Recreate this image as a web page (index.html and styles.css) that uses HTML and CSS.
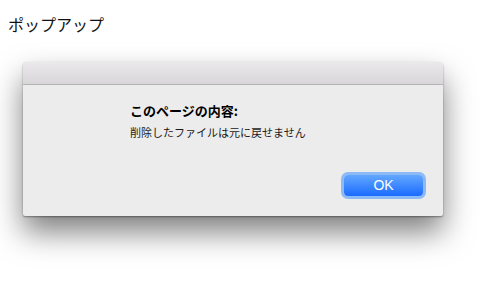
FILE: index.html
```html
<!DOCTYPE html>
<html lang="ja">
<head>
<meta charset="utf-8">
<title>ポップアップ</title>
<link rel="stylesheet" href="styles.css">
</head>
<body>
<div class="page">
  <div class="page-title">ポップアップ</div>
  <div class="dialog">
    <div class="titlebar"></div>
    <div class="dialog-body">
      <div class="heading">このページの内容:</div>
      <div class="message">削除したファイルは元に戻せません</div>
      <div class="actions">
        <button class="ok-btn" type="button">OK</button>
      </div>
    </div>
  </div>
</div>
</body>
</html>
```

FILE: styles.css
```css
html, body {
  margin: 0;
  padding: 0;
  background: #ffffff;
  min-height: 100%;
}
html {
  height: 100%;
}
body {
  font-family: "Noto Sans CJK JP", "Noto Sans", sans-serif;
  color: #111;
}
.page {
  padding: 13px 8px 60px 8px;
}
.page-title {
  font-size: 16px;
  line-height: 23px;
  height: 23px;
}
.dialog {
  margin-top: 26px;
  margin-left: 15px;
  width: 420px;
  height: 154px;
  box-sizing: border-box;
  background: #ececec;
  border-radius: 4px 4px 2px 2px;
  box-shadow: 0 16px 30px rgba(0, 0, 0, 0.5), 0 1px 2px rgba(0, 0, 0, 0.4);
  display: flex;
  flex-direction: column;
  position: relative;
}
.titlebar {
  height: 22px;
  flex: none;
  border-radius: 4px 4px 0 0;
  background: linear-gradient(#ebe9eb, #d8d6d8);
  border-bottom: 1px solid #b4b3b4;
}
.dialog-body {
  flex: 1;
  display: flex;
  flex-direction: column;
  padding: 16px 17px 17px 107px;
}
.heading {
  font-size: 13px;
  font-weight: bold;
  line-height: 19px;
  color: #000;
}
.message {
  margin-top: 4px;
  font-size: 11px;
  line-height: 16px;
  color: #1a1a1a;
}
.actions {
  margin-top: auto;
  display: flex;
  justify-content: flex-end;
}
.ok-btn {
  width: 79px;
  height: 21px;
  margin: 3px;
  padding: 0;
  border: none;
  border-radius: 4px;
  background: linear-gradient(#62a8ff, #1b6bff);
  box-shadow: 0 0 0 3px #8cbaf4;
  color: #fff;
  font-family: "Liberation Sans", Arial, sans-serif;
  font-size: 14px;
  line-height: 21px;
}
```
